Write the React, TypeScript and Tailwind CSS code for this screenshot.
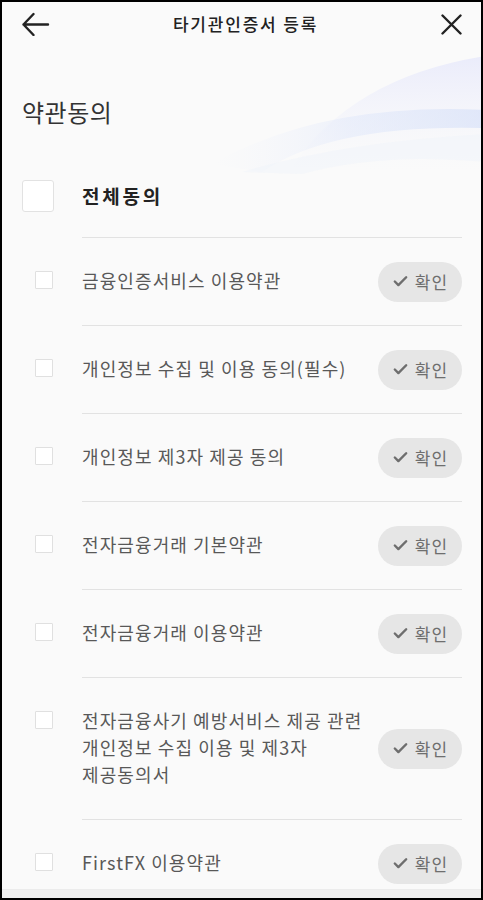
import { Check } from 'lucide-react';

const terms: string[][] = [
  ['금융인증서비스 이용약관'],
  ['개인정보 수집 및 이용 동의(필수)'],
  ['개인정보 제3자 제공 동의'],
  ['전자금융거래 기본약관'],
  ['전자금융거래 이용약관'],
  ['전자금융사기 예방서비스 제공 관련', '개인정보 수집 이용 및 제3자', '제공동의서'],
  ['FirstFX 이용약관'],
];

function Wave() {
  return (
    <svg className="absolute left-0 top-0 pointer-events-none" width="483" height="200" viewBox="0 0 483 200">
      <defs>
        <linearGradient id="lav" x1="0" y1="0" x2="0" y2="1">
          <stop offset="0" stopColor="#e6e8fb" stopOpacity="0.8" />
          <stop offset="1" stopColor="#f4f5fb" stopOpacity="0" />
        </linearGradient>
        <linearGradient id="blu" x1="0" y1="0" x2="1" y2="0">
          <stop offset="0" stopColor="#eef2fd" stopOpacity="0" />
          <stop offset="0.5" stopColor="#dce5fa" stopOpacity="0.7" />
          <stop offset="1" stopColor="#d3def8" stopOpacity="1" />
        </linearGradient>
      </defs>
      <path d="M290 165 Q 350 75 483 54 L 483 170 Z" fill="url(#lav)" />
      <path d="M210 162 Q 320 100 483 108 L 483 126 Q 330 122 260 170 Z" fill="url(#blu)" opacity="0.6" />
      <path d="M240 170 Q 340 140 483 132 L 483 160 Q 380 150 300 172 Z" fill="#eef2fb" opacity="0.4" />
    </svg>
  );
}

function TermRow({ lines }: { lines: string[] }) {
  return (
    <div>
      <div className="ml-[80px] h-px bg-[#e2e2e2]" />
      <div className="flex items-center min-h-[87px]">
        <div className="w-[80px] self-start pt-[33px] pl-[33px]">
          <div className="w-[18px] h-[18px] bg-white border border-[#e0e0e0] rounded-[1px]" />
        </div>
        <div className="flex-1 pt-[29px] pb-[31px] text-[18px] leading-[27px] text-[#585858] tracking-[1.1px]">
          {lines.map((l, i) => (
            <div key={i}>{l}</div>
          ))}
        </div>
        <button className="w-[84px] h-[40px] rounded-full bg-[#e6e6e6] flex items-center justify-center gap-[6px] text-[17px] text-[#6e6e6e] tracking-[1px]">
          <Check className="w-[17px] h-[17px]" strokeWidth={3.4} />
          <span>확인</span>
        </button>
      </div>
    </div>
  );
}

export default function App() {
  return (
    <div
      className="relative w-[483px] h-[900px] overflow-hidden border-2 border-black bg-[#fafafa]"
      style={{ fontFamily: '"Noto Sans CJK KR", "Noto Sans", sans-serif' }}
    >
      <Wave />

      <div className="relative pr-[19px]">
        {/* Header */}
        <div className="h-[44px] flex items-center justify-between pl-[20px]">
          <svg width="28" height="24" viewBox="0 0 28 24" fill="none" stroke="#222" strokeWidth="2.4" strokeLinecap="round" strokeLinejoin="round">
            <path d="M26 12.5 H1.5 M11.5 2 L1.5 12.5 L11.5 23" />
          </svg>
          <div className="text-[17px] font-medium text-[#222] tracking-[1.8px]">타기관인증서 등록</div>
          <svg width="21" height="21" viewBox="0 0 21 21" fill="none" stroke="#222" strokeWidth="2.4" strokeLinecap="round">
            <path d="M1.5 1.5 L19.5 19.5 M19.5 1.5 L1.5 19.5" />
          </svg>
        </div>

        <div className="mt-[50px] pl-[20px] text-[24px] leading-[32px] text-[#333] tracking-[0.5px]">약관동의</div>

        {/* All agree */}
        <div className="mt-[52px] flex items-center pl-[20px]">
          <div className="w-[32px] h-[32px] bg-white border border-[#e2e2e2] rounded-[3px]" />
          <div className="ml-[28px] text-[19px] font-bold text-[#222] tracking-[2.8px]">전체동의</div>
        </div>

        <div className="mt-[25px]">
          {terms.map((t, i) => (
            <TermRow key={i} lines={t} />
          ))}
        </div>
      </div>

      <div className="absolute left-0 right-0 bottom-0 h-[9px] bg-[#f0f0f0] border-t border-[#ececec]" />
    </div>
  );
}
